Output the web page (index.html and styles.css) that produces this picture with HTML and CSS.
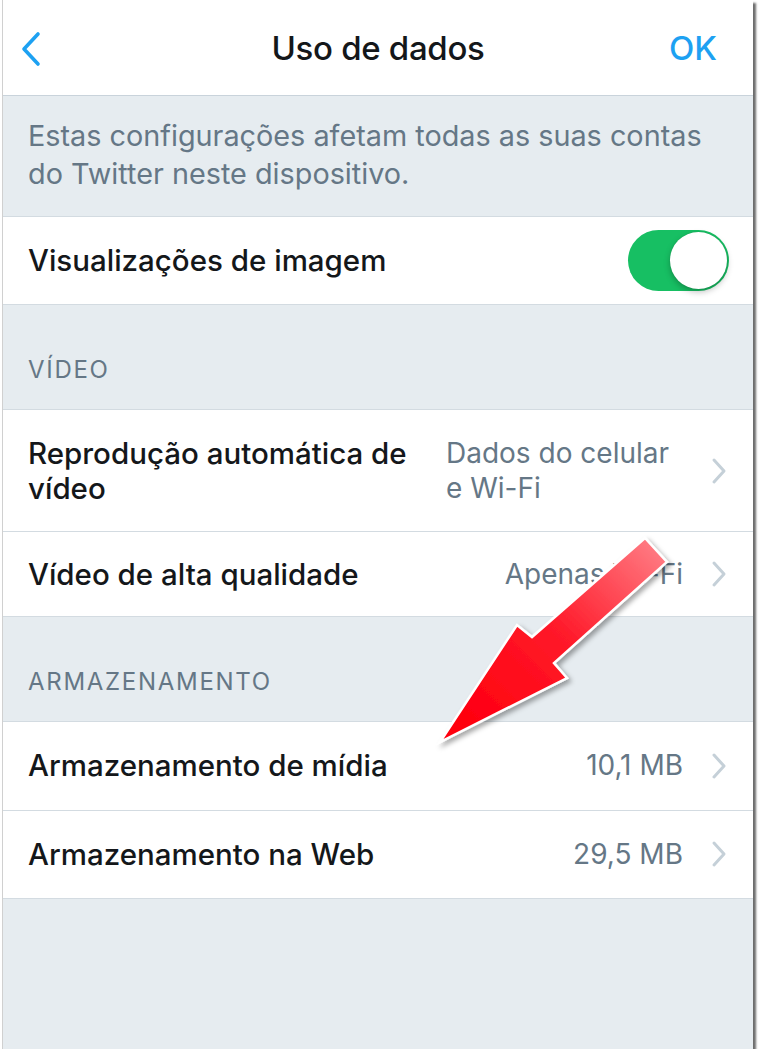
FILE: index.html
```html
<!DOCTYPE html>
<html lang="pt">
<head>
<meta charset="utf-8">
<title>Uso de dados</title>
<link rel="stylesheet" href="styles.css">
</head>
<body>
<div class="screen">
  <header class="nav">
    <svg class="back" width="24" height="36" viewBox="0 0 24 36"><path d="M19 3 L5 18 L19 33" fill="none" stroke="#1da1f2" stroke-width="3.6" stroke-linecap="round" stroke-linejoin="round"/></svg>
    <h1 class="title">Uso de dados</h1>
    <span class="ok">OK</span>
  </header>

  <div class="note">Estas configurações afetam todas as suas contas do Twitter neste dispositivo.</div>

  <div class="group">
    <div class="row row-toggle">
      <span class="label">Visualizações de imagem</span>
      <span class="toggle"><span class="knob"></span></span>
    </div>
  </div>

  <div class="section-head">VÍDEO</div>
  <div class="group">
    <div class="row row-tall">
      <span class="label label-wrap">Reprodução automática de vídeo</span>
      <span class="value value-wrap">Dados do celular e Wi-Fi</span>
      <svg class="chev" width="16" height="28" viewBox="0 0 16 28"><path d="M3 3 L13 14 L3 25" fill="none" stroke="#c5d0d8" stroke-width="3" stroke-linecap="round" stroke-linejoin="round"/></svg>
    </div>
    <div class="row">
      <span class="label">Vídeo de alta qualidade</span>
      <span class="value">Apenas Wi-Fi</span>
      <svg class="chev" width="16" height="28" viewBox="0 0 16 28"><path d="M3 3 L13 14 L3 25" fill="none" stroke="#c5d0d8" stroke-width="3" stroke-linecap="round" stroke-linejoin="round"/></svg>
    </div>
  </div>

  <div class="section-head">ARMAZENAMENTO</div>
  <div class="group">
    <div class="row row-store">
      <span class="label">Armazenamento de mídia</span>
      <span class="value">10,1 MB</span>
      <svg class="chev" width="16" height="28" viewBox="0 0 16 28"><path d="M3 3 L13 14 L3 25" fill="none" stroke="#c5d0d8" stroke-width="3" stroke-linecap="round" stroke-linejoin="round"/></svg>
    </div>
    <div class="row row-store">
      <span class="label">Armazenamento na Web</span>
      <span class="value">29,5 MB</span>
      <svg class="chev" width="16" height="28" viewBox="0 0 16 28"><path d="M3 3 L13 14 L3 25" fill="none" stroke="#c5d0d8" stroke-width="3" stroke-linecap="round" stroke-linejoin="round"/></svg>
    </div>
  </div>

  <div class="filler"></div>

  <svg class="arrow" width="760" height="1057" viewBox="0 0 760 1057">
    <defs>
      <linearGradient id="ag" x1="650" y1="540" x2="470" y2="720" gradientUnits="userSpaceOnUse">
        <stop offset="0" stop-color="#ff7a82"/>
        <stop offset="0.5" stop-color="#ff1a2a"/>
        <stop offset="1" stop-color="#ff0010"/>
      </linearGradient>
      <filter id="sh" x="-20%" y="-20%" width="140%" height="140%">
        <feDropShadow dx="3" dy="3" stdDeviation="2.5" flood-color="#000" flood-opacity="0.35"/>
      </filter>
    </defs>
    <polygon points="645,538 667,562 554,663 567,678 440,742 517,625 532,637" fill="url(#ag)" stroke="#fff" stroke-width="2.5" stroke-linejoin="miter" filter="url(#sh)"/>
  </svg>
</div>
</body>
</html>
```

FILE: styles.css
```css
html, body {
  margin: 0;
  padding: 0;
  background: #ffffff;
}

body {
  font-family: Inter, "Open Sans", "Liberation Sans", sans-serif;
  color: #14171a;
}

.screen {
  position: relative;
  width: 750px;
  height: 1049px;
  margin-left: 2px;
  border-left: 1px solid #d0d0d0;
  background: #e6ecf0;
  box-shadow: 3px 3px 2px rgba(60, 60, 60, 0.75);
  display: flex;
  flex-direction: column;
}

.nav {
  height: 95px;
  background: #ffffff;
  border-bottom: 1px solid #c9d3db;
  display: flex;
  align-items: center;
  justify-content: space-between;
  padding: 0 36px 0 16px;
  position: relative;
}

.back {
  display: block;
  margin-top: 2px;
}

.title {
  position: absolute;
  left: 0;
  right: 0;
  text-align: center;
  margin: 0;
  font-size: 33px;
  font-weight: 500;
  letter-spacing: -0.3px;
  color: #14171a;
  pointer-events: none;
}

.ok {
  font-size: 33px;
  font-weight: 500;
  color: #1da1f2;
}

.note {
  padding: 21px 30px 23px 25px;
  font-size: 28.8px;
  line-height: 38px;
  color: #657786;
}

.group {
  background: #ffffff;
  border-top: 1px solid #d3dbe1;
  border-bottom: 1px solid #d3dbe1;
}

.row {
  display: flex;
  align-items: center;
  min-height: 84px;
  padding: 0 26px 0 25px;
  border-top: 1px solid #d3dbe1;
}

.row:first-child {
  border-top: none;
}

.row-toggle {
  min-height: 87px;
  padding-right: 24px;
}

.row-tall {
  min-height: 121px;
}

.row-store {
  min-height: 87.5px;
}

.label {
  flex: 1;
  font-size: 29.5px;
  font-weight: 500;
  color: #14171a;
  line-height: 35px;
}

.label-wrap {
  flex: 0 0 403px;
}

.value {
  font-size: 28px;
  color: #657786;
  line-height: 35px;
  text-align: right;
  margin-right: 28px;
}

.value-wrap {
  flex: 0 0 240px;
  text-align: left;
  padding-left: 15px;
  margin-right: auto;
}

.chev {
  display: block;
  flex: none;
}

.toggle {
  width: 101px;
  height: 61px;
  border-radius: 31px;
  background: #17bf63;
  position: relative;
  flex: none;
}

.knob {
  position: absolute;
  right: 2px;
  top: 2px;
  width: 57px;
  height: 57px;
  border-radius: 50%;
  background: #ffffff;
  box-shadow: 0 3px 6px rgba(0, 0, 0, 0.25), 0 0 1px rgba(0, 0, 0, 0.2);
}

.section-head {
  height: 104px;
  box-sizing: border-box;
  display: flex;
  align-items: flex-end;
  padding: 0 25px 25px;
  font-size: 24px;
  letter-spacing: 1.7px;
  color: #657786;
}

.filler {
  flex: 1;
}

.arrow {
  position: absolute;
  left: -3px;
  top: 0;
  pointer-events: none;
}
```
